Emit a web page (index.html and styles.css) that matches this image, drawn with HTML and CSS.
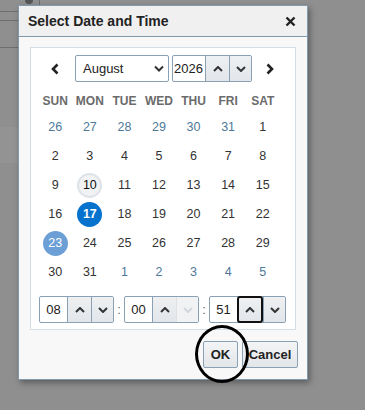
FILE: index.html
```html
<!DOCTYPE html>
<html lang="en">
<head>
  <meta charset="UTF-8">
  <title>Select Date and Time</title>
  <link rel="stylesheet" href="styles.css">
</head>
<body>

  <!-- page behind the overlay -->
  <div class="backdrop">
    <div class="bg-line l1"></div>
    <div class="bg-line l2"></div>
    <div class="bg-line l3"></div>
    <div class="bg-vline"></div>
    <div class="bg-dot"></div>
    <div class="bg-band"></div>
  </div>

  <div class="dialog">
    <div class="dlg-head">
      <span class="dlg-title">Select Date and Time</span>
      <svg class="dlg-close" width="11" height="11" viewBox="0 0 11 11"><path d="M1.5,1.5 L9.5,9.5 M9.5,1.5 L1.5,9.5" stroke="#222" stroke-width="2.4"/></svg>
    </div>

    <div class="dlg-body">
      <div class="panel">
        <div class="nav">
          <span class="nav-arrow prev">
            <svg width="10" height="12" viewBox="0 0 10 12"><polyline points="7.5,1.5 3,6 7.5,10.5" fill="none" stroke="#222" stroke-width="2.6"/></svg>
          </span>
          <div class="month">
            <span>August</span>
            <svg width="10" height="7" viewBox="0 0 10 7"><polyline points="1,1.5 5,5.5 9,1.5" fill="none" stroke="#333" stroke-width="2"/></svg>
          </div>
          <div class="spin year">
            <span class="spin-val">2026</span>
            <span class="spin-btn"><svg width="10" height="6" viewBox="0 0 10 6"><polyline points="1,5 5,1 9,5" fill="none" stroke="#333" stroke-width="2"/></svg></span>
            <span class="spin-btn"><svg width="10" height="6" viewBox="0 0 10 6"><polyline points="1,1 5,5 9,1" fill="none" stroke="#333" stroke-width="2"/></svg></span>
          </div>
          <span class="nav-arrow next">
            <svg width="10" height="12" viewBox="0 0 10 12"><polyline points="2.5,1.5 7,6 2.5,10.5" fill="none" stroke="#222" stroke-width="2.6"/></svg>
          </span>
        </div>

        <div class="cal">
          <div class="dow">SUN</div><div class="dow">MON</div><div class="dow">TUE</div><div class="dow">WED</div><div class="dow">THU</div><div class="dow">FRI</div><div class="dow">SAT</div>

          <div class="day other"><span>26</span></div><div class="day other"><span>27</span></div><div class="day other"><span>28</span></div><div class="day other"><span>29</span></div><div class="day other"><span>30</span></div><div class="day other"><span>31</span></div><div class="day"><span>1</span></div>
          <div class="day"><span>2</span></div><div class="day"><span>3</span></div><div class="day"><span>4</span></div><div class="day"><span>5</span></div><div class="day"><span>6</span></div><div class="day"><span>7</span></div><div class="day"><span>8</span></div>
          <div class="day"><span>9</span></div><div class="day today"><span>10</span></div><div class="day"><span>11</span></div><div class="day"><span>12</span></div><div class="day"><span>13</span></div><div class="day"><span>14</span></div><div class="day"><span>15</span></div>
          <div class="day"><span>16</span></div><div class="day selected"><span>17</span></div><div class="day"><span>18</span></div><div class="day"><span>19</span></div><div class="day"><span>20</span></div><div class="day"><span>21</span></div><div class="day"><span>22</span></div>
          <div class="day hover"><span>23</span></div><div class="day"><span>24</span></div><div class="day"><span>25</span></div><div class="day"><span>26</span></div><div class="day"><span>27</span></div><div class="day"><span>28</span></div><div class="day"><span>29</span></div>
          <div class="day"><span>30</span></div><div class="day"><span>31</span></div><div class="day other"><span>1</span></div><div class="day other"><span>2</span></div><div class="day other"><span>3</span></div><div class="day other"><span>4</span></div><div class="day other"><span>5</span></div>
        </div>

        <div class="time">
          <div class="spin t">
            <span class="spin-val">08</span>
            <span class="spin-btn"><svg width="10" height="6" viewBox="0 0 10 6"><polyline points="1,5 5,1 9,5" fill="none" stroke="#333" stroke-width="2"/></svg></span>
            <span class="spin-btn"><svg width="10" height="6" viewBox="0 0 10 6"><polyline points="1,1 5,5 9,1" fill="none" stroke="#333" stroke-width="2"/></svg></span>
          </div>
          <span class="colon">:</span>
          <div class="spin t">
            <span class="spin-val">00</span>
            <span class="spin-btn"><svg width="10" height="6" viewBox="0 0 10 6"><polyline points="1,5 5,1 9,5" fill="none" stroke="#333" stroke-width="2"/></svg></span>
            <span class="spin-btn disabled"><svg width="10" height="6" viewBox="0 0 10 6"><polyline points="1,1 5,5 9,1" fill="none" stroke="#d3d7db" stroke-width="2"/></svg></span>
          </div>
          <span class="colon">:</span>
          <div class="spin t">
            <span class="spin-val">51</span>
            <span class="spin-btn focus"><svg width="10" height="6" viewBox="0 0 10 6"><polyline points="1,5 5,1 9,5" fill="none" stroke="#333" stroke-width="2"/></svg></span>
            <span class="spin-btn"><svg width="10" height="6" viewBox="0 0 10 6"><polyline points="1,1 5,5 9,1" fill="none" stroke="#333" stroke-width="2"/></svg></span>
          </div>
        </div>
      </div>

      <div class="footer">
        <button class="btn ok">OK</button>
        <button class="btn cancel">Cancel</button>
      </div>
    </div>
  </div>

  <div class="mark"></div>

</body>
</html>
```

FILE: styles.css
```css
body {
  margin: 0;
  width: 365px;
  height: 410px;
  background-color: #8f8f8f;
  font-family: 'Liberation Sans', Arial, sans-serif;
  overflow: hidden;
  position: relative;
}

/* page under the overlay */
.bg-line {
  position: absolute;
  left: 0;
  width: 18px;
  height: 1px;
  background-color: #6e6e6e;
}

.l1 { top: 11px; }
.l2 { top: 20px; }
.l3 { top: 47px; }

.bg-vline {
  position: absolute;
  left: 39px;
  top: 0;
  width: 1px;
  height: 5px;
  background-color: #6e6e6e;
}

.bg-dot {
  position: absolute;
  left: 25px;
  top: -4px;
  width: 8px;
  height: 8px;
  border-radius: 50%;
  background-color: #555;
}

.bg-band {
  position: absolute;
  left: 0;
  top: 127px;
  width: 18px;
  height: 36px;
  background-color: #939393;
}

/* dialog */
.dialog {
  position: absolute;
  left: 18px;
  top: 5px;
  width: 288px;
  border: 1px solid #8198ad;
  background-color: #f8f8f8;
  box-shadow: 2px 3px 6px rgba(0, 0, 0, 0.35);
}

.dlg-head {
  height: 30px;
  background-color: #f0f0f0;
  border-bottom: 1px solid #8198ad;
  display: flex;
  align-items: center;
  justify-content: space-between;
  padding: 0 11px 0 9px;
}

.dlg-title {
  font-size: 14px;
  font-weight: bold;
  color: #222;
}

/* the panel with the calendar */
.dlg-body {
  padding: 10px 11px 11px 11px;
}

.panel {
  background-color: #fff;
  border: 1px solid #d5dee7;
  padding: 7px 15px 6px 7px;
}

/* month / year row */
.nav {
  display: flex;
  align-items: center;
  height: 27px;
}

.nav > * {
  flex-shrink: 0;
}

.nav-arrow {
  width: 20px;
  display: flex;
  justify-content: center;
}

.prev {
  margin-left: 7px;
  margin-right: 10px;
}

.next {
  margin-left: 8px;
}

.month {
  box-sizing: border-box;
  width: 94px;
  height: 27px;
  border: 1px solid #8aa0b5;
  border-radius: 2px;
  display: flex;
  align-items: center;
  justify-content: space-between;
  padding: 0 4px 0 7px;
  font-size: 13px;
  color: #222;
  margin-right: 3px;
}

.spin {
  display: flex;
  height: 27px;
  box-sizing: border-box;
  border: 1px solid #8aa0b5;
  border-radius: 2px;
  background-color: #fff;
}

.spin-val {
  display: flex;
  align-items: center;
  justify-content: center;
  font-size: 13px;
  color: #222;
}

.year .spin-val {
  width: 31px;
  justify-content: flex-start;
  padding-left: 1px;
}

.spin-btn {
  width: 23px;
  display: flex;
  align-items: center;
  justify-content: center;
  border-left: 1px solid #8aa0b5;
  background: linear-gradient(#eef0f2, #e2e6ea);
}

.spin-btn:last-child {
  width: 21px;
}

.spin-btn.disabled {
  background: #f1f2f4;
  border-left-color: #dde2e7;
}

.spin-btn.focus {
  border: 2px solid #111;
  border-radius: 3px;
  margin: -1px 0 -1px 0;
  width: 22px;
}

/* calendar grid */
.cal {
  display: grid;
  grid-template-columns: repeat(7, 1fr);
  grid-template-rows: 26px repeat(6, 29px);
  width: 242px;
  margin-top: 6px;
}

.dow {
  display: flex;
  align-items: center;
  justify-content: center;
  font-size: 12px;
  font-weight: bold;
  color: #6b6b6b;
}

.day {
  display: flex;
  align-items: center;
  justify-content: center;
  margin-top: -3px;
  font-size: 12.5px;
  color: #333;
}

.day span {
  width: 25px;
  height: 25px;
  border-radius: 50%;
  display: flex;
  align-items: center;
  justify-content: center;
  box-sizing: border-box;
}

.day.other {
  color: #4e7898;
}

.day.today span {
  border: 2px solid #dde3e9;
  background-color: #f1f2f3;
  color: #111;
}

.day.selected span {
  background-color: #0572ce;
  color: #fff;
  font-weight: bold;
}

.day.hover span {
  background-color: #6b9fd6;
  color: #fff;
}

/* time row */
.time {
  display: flex;
  align-items: center;
  margin-top: 8px;
  margin-left: 1px;
}

.time > * {
  flex-shrink: 0;
}

.time .spin-val {
  width: 27px;
}

.colon {
  width: 10px;
  text-align: center;
  font-size: 13px;
  color: #666;
}

/* buttons */
.footer {
  display: flex;
  justify-content: flex-end;
  gap: 4px;
  margin-top: 11px;
  margin-right: -2px;
}

.btn {
  height: 27px;
  border: 1px solid #8aa0b5;
  border-radius: 2px;
  background: linear-gradient(#f3f4f6, #e3e6e9);
  font-family: 'Liberation Sans', Arial, sans-serif;
  font-size: 13px;
  font-weight: bold;
  color: #222;
  padding: 0;
}

.ok {
  width: 35px;
}

.cancel {
  width: 56px;
}

/* hand-drawn circle around OK */
.mark {
  position: absolute;
  left: 195px;
  top: 325px;
  width: 54px;
  height: 58px;
  box-sizing: border-box;
  border: 3px solid #000;
  border-radius: 50%;
}
```
